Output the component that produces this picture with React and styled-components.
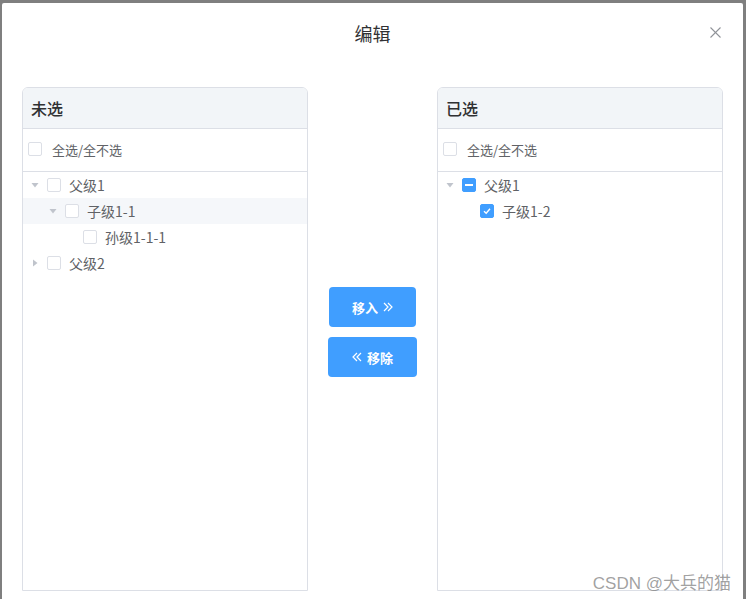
import React from "react";
import styled, { createGlobalStyle } from "styled-components";

const Global = createGlobalStyle`
  html, body { margin: 0; padding: 0; overflow: hidden; }
  body {
    background: #7f7f7f;
    font-family: "Microsoft YaHei", "Noto Sans CJK SC", "Liberation Sans", sans-serif;
    color: #606266;
  }
`;

const Dialog = styled.div`
  position: relative;
  margin: 3px 0 0 2px;
  width: 741px;
  height: 596px;
  background: #fff;
  border-radius: 2px 2px 0 0;
  box-sizing: border-box;
  overflow: hidden;
`;

const Header = styled.div`
  position: relative;
  height: 84px;
  display: flex;
  justify-content: center;
  padding-top: 18px;
  box-sizing: border-box;
`;

const Title = styled.span`
  font-size: 18px;
  line-height: 24px;
  color: #303133;
`;

const Close = styled.button`
  position: absolute;
  right: 21px;
  top: 22px;
  width: 14px;
  height: 14px;
  border: 0;
  padding: 0;
  background: none;
  display: flex;
  align-items: center;
  justify-content: center;
`;

const Body = styled.div`
  display: grid;
  grid-template-columns: 286px 1fr 286px;
  padding: 0 20px;
`;

const Panel = styled.div`
  height: 504px;
  border: 1px solid #dcdfe6;
  border-radius: 6px 6px 0 0;
  box-sizing: border-box;
  background: #fff;
  overflow: hidden;
`;

const PanelHeader = styled.div`
  height: 40px;
  background: #f2f5f8;
  border-bottom: 1px solid #dcdfe6;
  display: flex;
  align-items: center;
  padding-left: 8px;
  font-size: 16px;
  color: #303133;
  font-weight: 500;
`;

const SelectAll = styled.div`
  height: 43px;
  border-bottom: 1px solid #dcdfe6;
  display: flex;
  align-items: center;
  padding-left: 5px;
  padding-bottom: 2px;
  box-sizing: border-box;
  gap: 10px;
  font-size: 13px;
  color: #606266;
`;

const Tree = styled.div`
  display: flex;
  flex-direction: column;
`;

const Row = styled.div`
  height: 26px;
  display: flex;
  align-items: center;
  padding-left: ${(p) => 6 + p.$level * 18}px;
  background: ${(p) => (p.$hover ? "#f5f7fa" : "transparent")};
  font-size: 14px;
  color: #606266;
`;

const Caret = styled.span`
  width: 12px;
  height: 12px;
  margin-right: 6px;
  display: flex;
  align-items: center;
  justify-content: center;
  visibility: ${(p) => (p.$none ? "hidden" : "visible")};
`;

const Box = styled.span`
  width: 14px;
  height: 14px;
  box-sizing: border-box;
  border: 1px solid ${(p) => (p.$on ? "#409eff" : "#dcdfe6")};
  background: ${(p) => (p.$on ? "#409eff" : "#fff")};
  border-radius: 2px;
  display: inline-flex;
  align-items: center;
  justify-content: center;
  flex-shrink: 0;
`;

const Label = styled.span`
  margin-left: 8px;
  line-height: 18px;
  padding-bottom: 1px;
`;

const Middle = styled.div`
  display: flex;
  flex-direction: column;
  align-items: center;
  padding-top: 200px;
  gap: 10px;
`;

const Btn = styled.button`
  height: 40px;
  padding: 0 ${(p) => p.$pad}px;
  border: 0;
  border-radius: 4px;
  background: #409eff;
  color: #fff;
  font-family: inherit;
  font-size: 13px;
  font-weight: bold;
  display: flex;
  align-items: center;
  gap: 5px;
`;

const Watermark = styled.div`
  position: absolute;
  right: 12px;
  top: 566px;
  font-size: 17px;
  color: rgba(120, 120, 120, 0.7);
  font-family: "Liberation Sans", "Noto Sans CJK SC", sans-serif;
`;

const CaretIcon = ({ dir }) => (
  <svg width="8" height="8" viewBox="0 0 8 8">
    {dir === "down" ? (
      <polygon points="0.5,2 7.5,2 4,6.5" fill="#c0c4cc" />
    ) : (
      <polygon points="2,0.5 6.5,4 2,7.5" fill="#c0c4cc" />
    )}
  </svg>
);

const Check = ({ state }) => (
  <Box $on={state === "checked" || state === "half"}>
    {state === "checked" && (
      <svg width="10" height="10" viewBox="0 0 10 10">
        <polyline points="2,5.2 4.2,7.2 8,2.8" fill="none" stroke="#fff" strokeWidth="1.4" />
      </svg>
    )}
    {state === "half" && <svg width="8" height="2" viewBox="0 0 8 2"><rect width="8" height="2" fill="#fff" /></svg>}
  </Box>
);

const TreeRow = ({ level, caret, label, state, hover }) => (
  <Row $level={level} $hover={hover}>
    <Caret $none={!caret}>{caret && <CaretIcon dir={caret} />}</Caret>
    <Check state={state} />
    <Label>{label}</Label>
  </Row>
);

const TransferPanel = ({ title, rows }) => (
  <Panel>
    <PanelHeader>{title}</PanelHeader>
    <SelectAll>
      <Check />
      <span>全选/全不选</span>
    </SelectAll>
    <Tree>
      {rows.map((r) => (
        <TreeRow key={r.label} {...r} />
      ))}
    </Tree>
  </Panel>
);

const leftRows = [
  { level: 0, caret: "down", label: "父级1" },
  { level: 1, caret: "down", label: "子级1-1", hover: true },
  { level: 2, label: "孙级1-1-1" },
  { level: 0, caret: "right", label: "父级2" },
];

const rightRows = [
  { level: 0, caret: "down", label: "父级1", state: "half" },
  { level: 1, label: "子级1-2", state: "checked" },
];

const Chev = ({ left }) => (
  <svg width="10" height="10" viewBox="0 0 10 10">
    {left ? (
      <g fill="none" stroke="#fff" strokeWidth="1.2">
        <polyline points="5,1 1,5 5,9" />
        <polyline points="9,1 5,5 9,9" />
      </g>
    ) : (
      <g fill="none" stroke="#fff" strokeWidth="1.2">
        <polyline points="1,1 5,5 1,9" />
        <polyline points="5,1 9,5 5,9" />
      </g>
    )}
  </svg>
);

export default function App() {
  return (
    <>
      <Global />
      <Dialog>
        <Header>
          <Title>编辑</Title>
          <Close aria-label="close">
            <svg width="11" height="11" viewBox="0 0 11 11">
              <g stroke="#909399" strokeWidth="1.1">
                <line x1="0.5" y1="0.5" x2="10.5" y2="10.5" />
                <line x1="10.5" y1="0.5" x2="0.5" y2="10.5" />
              </g>
            </svg>
          </Close>
        </Header>
        <Body>
          <TransferPanel title="未选" rows={leftRows} />
          <Middle>
            <Btn $pad={23}>移入 <Chev /></Btn>
            <Btn $pad={24}><Chev left /> 移除</Btn>
          </Middle>
          <TransferPanel title="已选" rows={rightRows} />
        </Body>
        <Watermark>CSDN @大兵的猫</Watermark>
      </Dialog>
    </>
  );
}
